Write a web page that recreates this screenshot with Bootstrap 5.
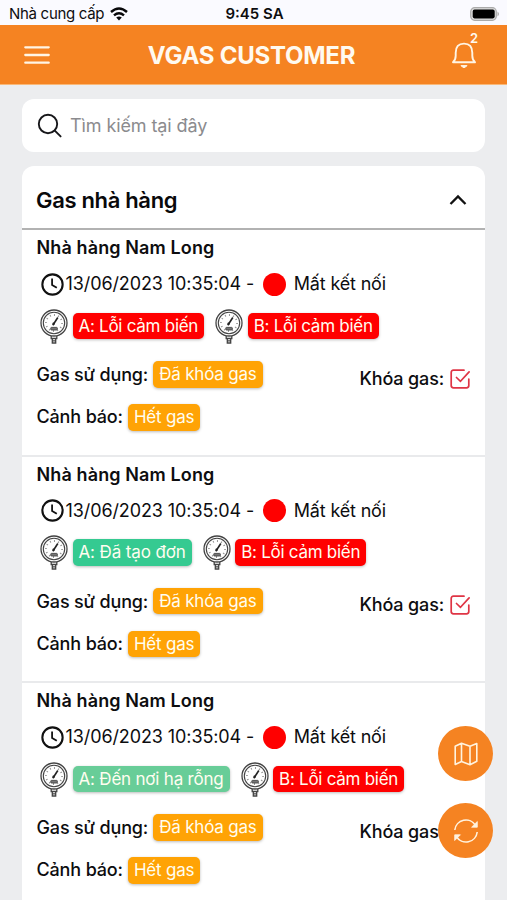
<!DOCTYPE html>
<html lang="vi">
<head>
<meta charset="utf-8">
<meta name="viewport" content="width=device-width, initial-scale=1">
<title>VGAS Customer</title>
<link href="https://cdn.jsdelivr.net/npm/bootstrap@5.3.0/dist/css/bootstrap.min.css" rel="stylesheet">
<style>
body{font-family:Inter,"Liberation Sans",sans-serif;background:#ecedef;color:#0d0d0f;height:900px;overflow:hidden;font-size:18px;line-height:24px}
svg{display:block;flex:none}
.status-bar{height:25px;background:#fafaff;font-size:15px;padding:2px 7px 0 9px}
.status-bar>div{flex:1 1 0}
.carrier{letter-spacing:-.3px}
.wifi{margin-left:6px}
.status-bar .clock{flex:none;font-weight:600}
.app-bar{height:60px;background:#f58322;color:#fffaf0;border-bottom:1px solid #f9b878;padding:0 24px}
.app-title{font-size:24px;font-weight:700;letter-spacing:-.25px;padding:3px 0 0 2px}
.bell{margin-right:6px}
.bell-count{position:absolute;top:-11px;right:-1px;font-size:13px;font-weight:600;line-height:16px}
.page-body{padding:14px 22px 0}
.search-box{height:53px;border-radius:12px;padding:0 15px;background:#fff;color:#8b8b8e;gap:7px;letter-spacing:-.1px}
.gas-card{margin-top:14px;border-radius:12px 12px 0 0;background:#fff}
.gas-head{height:64px;padding:6px 17px 0 14px;border-bottom:2px solid #b2b2b2;font-size:22px;font-weight:600;letter-spacing:-.33px;color:#09090b}
.station{height:226.5px;padding:0 15px 0 14.5px;border-bottom:2px solid #e9eaec}
.station-name{height:36px;font-weight:600;letter-spacing:.12px}
.time-row{height:36px;padding-left:4px;letter-spacing:-.1px}
.clock-icon{margin-right:2px}
.sensor-row{height:48px;padding-left:3.5px}
.gauge-icon{margin-right:4.5px}
.tag+.gauge-icon{margin-left:11px}
.status-dot{width:23px;height:23px;border-radius:50%;background:#f00;margin:0 7.5px 0 9px}
.conn{letter-spacing:-.17px}
.tag{height:26.5px;border-radius:5px;padding:0 6px;color:#fffdf0;font-size:17px;letter-spacing:-.27px;line-height:26px;box-shadow:0 1px 3px #0004;white-space:nowrap}
.tag-red{background:#f00}.tag-orange{background:#ffa305;letter-spacing:-.2px}.tag-green{background:#35ca91}.tag-mint{background:#68cd98;letter-spacing:-.2px}
.tag-green{letter-spacing:-.12px}
.use-row{height:49px;font-weight:500}
.warn-row{height:35px;font-weight:500}
.warn-row .tag{margin-top:2px}
.field-label{letter-spacing:-.15px;line-height:27px;margin-right:5px}
.lock{margin-top:8px;gap:6px;letter-spacing:-.15px}
.fab-stack{position:fixed;right:14px;top:726px;display:grid;gap:22px}
.fab{width:55px;height:55px;border-radius:50%;background:#f58322;color:#fff3df}
</style>
</head>
<body>
<svg width="0" height="0" class="position-absolute" aria-hidden="true">
<symbol id="gauge" viewBox="0 0 28 35"><g fill="none" stroke="#444">
<circle cx="14" cy="14" r="13" stroke-width="1.3"/><circle cx="14" cy="14" r="10.7" stroke-width="1.1"/>
<circle cx="14" cy="14" r="8" stroke-width="1.8" stroke-dasharray="1 3.08" pathLength="49" opacity=".6"/>
<path d="M12.8 16.2 17.8 8.5" stroke="#222" stroke-width="1.6"/><circle cx="13.6" cy="14.7" r="1.2" fill="#222" stroke="none"/><rect x="10.8" y="18.4" width="6.5" height="2.6" rx=".6" fill="#777" stroke-width=".9"/>
<path d="M11.2 27v2.5h5.6V27M12.3 29.5V34h3.4v-4.5M12.3 31.8h3.4" stroke-width="1.3"/></g></symbol>
<symbol id="clock" viewBox="0 0 22 22"><g fill="none" stroke="#111" stroke-width="2"><circle cx="11" cy="11" r="9.7"/><path d="M10.6 5.2v6.2l4.5 2.8" stroke-width="1.7"/></g></symbol>
<symbol id="check" viewBox="0 0 20 20"><g fill="none" stroke="#df3545" stroke-width="1.7" stroke-linecap="round" stroke-linejoin="round"><path d="M14 1.2H3.5Q1.2 1.2 1.2 3.5v13q0 2.3 2.3 2.3h13q2.3 0 2.3-2.3V10"/><path d="m6.5 8.5 4 3.8 8.6-9.4"/></g></symbol>
</svg>

<div class="status-bar d-flex align-items-center">
<div class="d-flex align-items-center"><span class="carrier">Nhà cung cấp</span>
<svg width="18" height="14" viewBox="0 0 18 14" class="wifi" fill="none" stroke="#08080a" stroke-width="2.4"><path d="M1 5Q9-2.2 17 5M4 8.4q5-4.3 10 0"/><path d="m6.2 10.5 2.8 3 2.8-3Q9 8.6 6.2 10.5Z" fill="#08080a" stroke="none"/></svg></div>
<div class="clock">9:45 SA</div>
<div class="d-flex justify-content-end"><svg width="30" height="14" viewBox="0 0 30 14"><rect x=".7" y=".7" width="25.6" height="12.6" rx="4" fill="#ddd" stroke="#aaa" stroke-width="1.2"/><rect x="2.7" y="2.6" width="22" height="8.8" rx="1.8"/><path d="M27.5 4.5q3 2.5 0 5Z" fill="#aaa"/></svg></div>
</div>

<header class="app-bar d-flex align-items-center justify-content-between">
<svg width="26" height="20" viewBox="0 0 26 20" stroke="#fff5e5" stroke-width="2.3" stroke-linecap="round"><path d="M1.3 2.3h23.4M1.3 10h23.4M1.3 17.7h23.4"/></svg>
<h1 class="app-title m-0">VGAS CUSTOMER</h1>
<div class="bell position-relative"><svg width="26" height="28" viewBox="0 0 26 28" fill="none" stroke="#fff5e5" stroke-width="1.9" stroke-linejoin="round"><path d="M2 21.3q2.7-2.5 2.7-6.5v-3q0-9.2 8.3-9.2t8.3 9.2v3q0 4 2.7 6.5Z"/><path d="M10 24.6q3 4 6 0Z" fill="#fff5e5" stroke-width="1"/></svg><span class="bell-count">2</span></div>
</header>

<main class="page-body">
<div class="search-box d-flex align-items-center"><svg width="26" height="26" viewBox="0 0 26 26" fill="none" stroke="#17171a" stroke-width="1.9" stroke-linecap="round"><circle cx="11" cy="11" r="9.2"/><path d="m17.8 17.6 5.8 5.8"/></svg><span>Tìm kiếm tại đây</span></div>

<section class="gas-card">
<div class="gas-head d-flex align-items-center justify-content-between"><span>Gas nhà hàng</span><svg width="20" height="14" viewBox="0 0 20 14" fill="none" stroke="#111" stroke-width="2.3"><path d="m2.5 11 7.5-7.5 7.5 7.5"/></svg></div>

<article class="station">
<div class="station-name d-flex align-items-center"><span>Nhà hàng Nam Long</span></div>
<div class="time-row d-flex align-items-center"><svg width="23" height="23" class="clock-icon"><use href="#clock"/></svg><span class="stamp">13/06/2023 10:35:04 -</span><i class="status-dot"></i><span class="conn">Mất kết nối</span></div>
<div class="sensor-row d-flex align-items-center"><svg width="28" height="35" class="gauge-icon"><use href="#gauge"/></svg><span class="tag tag-red">A: Lỗi cảm biến</span><svg width="28" height="35" class="gauge-icon"><use href="#gauge"/></svg><span class="tag tag-red">B: Lỗi cảm biến</span></div>
<div class="use-row d-flex align-items-center justify-content-between"><div class="d-flex"><span class="field-label">Gas sử dụng:</span><span class="tag tag-orange fw-normal">Đã khóa gas</span></div><div class="lock d-flex align-items-center"><span>Khóa gas:</span><svg width="20" height="20"><use href="#check"/></svg></div></div>
<div class="warn-row d-flex align-items-center"><span class="field-label">Cảnh báo:</span><span class="tag tag-orange fw-normal">Hết gas</span></div>
</article>

<article class="station">
<div class="station-name d-flex align-items-center"><span>Nhà hàng Nam Long</span></div>
<div class="time-row d-flex align-items-center"><svg width="23" height="23" class="clock-icon"><use href="#clock"/></svg><span class="stamp">13/06/2023 10:35:04 -</span><i class="status-dot"></i><span class="conn">Mất kết nối</span></div>
<div class="sensor-row d-flex align-items-center"><svg width="28" height="35" class="gauge-icon"><use href="#gauge"/></svg><span class="tag tag-green">A: Đã tạo đơn</span><svg width="28" height="35" class="gauge-icon"><use href="#gauge"/></svg><span class="tag tag-red">B: Lỗi cảm biến</span></div>
<div class="use-row d-flex align-items-center justify-content-between"><div class="d-flex"><span class="field-label">Gas sử dụng:</span><span class="tag tag-orange fw-normal">Đã khóa gas</span></div><div class="lock d-flex align-items-center"><span>Khóa gas:</span><svg width="20" height="20"><use href="#check"/></svg></div></div>
<div class="warn-row d-flex align-items-center"><span class="field-label">Cảnh báo:</span><span class="tag tag-orange fw-normal">Hết gas</span></div>
</article>

<article class="station">
<div class="station-name d-flex align-items-center"><span>Nhà hàng Nam Long</span></div>
<div class="time-row d-flex align-items-center"><svg width="23" height="23" class="clock-icon"><use href="#clock"/></svg><span class="stamp">13/06/2023 10:35:04 -</span><i class="status-dot"></i><span class="conn">Mất kết nối</span></div>
<div class="sensor-row d-flex align-items-center"><svg width="28" height="35" class="gauge-icon"><use href="#gauge"/></svg><span class="tag tag-mint">A: Đến nơi hạ rỗng</span><svg width="28" height="35" class="gauge-icon"><use href="#gauge"/></svg><span class="tag tag-red">B: Lỗi cảm biến</span></div>
<div class="use-row d-flex align-items-center justify-content-between"><div class="d-flex"><span class="field-label">Gas sử dụng:</span><span class="tag tag-orange fw-normal">Đã khóa gas</span></div><div class="lock d-flex align-items-center"><span>Khóa gas:</span><svg width="20" height="20"><use href="#check"/></svg></div></div>
<div class="warn-row d-flex align-items-center"><span class="field-label">Cảnh báo:</span><span class="tag tag-orange fw-normal">Hết gas</span></div>
</article>
</section>
</main>

<div class="fab-stack">
<div class="fab d-flex align-items-center justify-content-center"><svg width="24" height="24" viewBox="0 0 24 24" fill="none" stroke="currentColor" stroke-width="1.6" stroke-linejoin="round"><path d="M1.2 4.3 7.5 1.2l8.5 3 6.8-2.6v17.6L16 22.8l-8.5-3.3-6.3 3ZM7.5 1.2v18.3M16 4.2v18.6"/></svg></div>
<div class="fab d-flex align-items-center justify-content-center"><svg width="26" height="26" viewBox="0 0 26 26" fill="none" stroke="currentColor" stroke-width="1.6"><path d="M1.8 12A11.2 11.2 0 0 1 22.6 7.5M24.2 14A11.2 11.2 0 0 1 3.4 18.5"/><path d="M24.3 3.5v5.7h-5.7ZM1.7 22.5v-5.7h5.7Z" fill="currentColor" stroke-width=".8"/></svg></div>
</div>
<script src="https://cdn.jsdelivr.net/npm/bootstrap@5.3.0/dist/js/bootstrap.bundle.min.js"></script>
</body>
</html>
